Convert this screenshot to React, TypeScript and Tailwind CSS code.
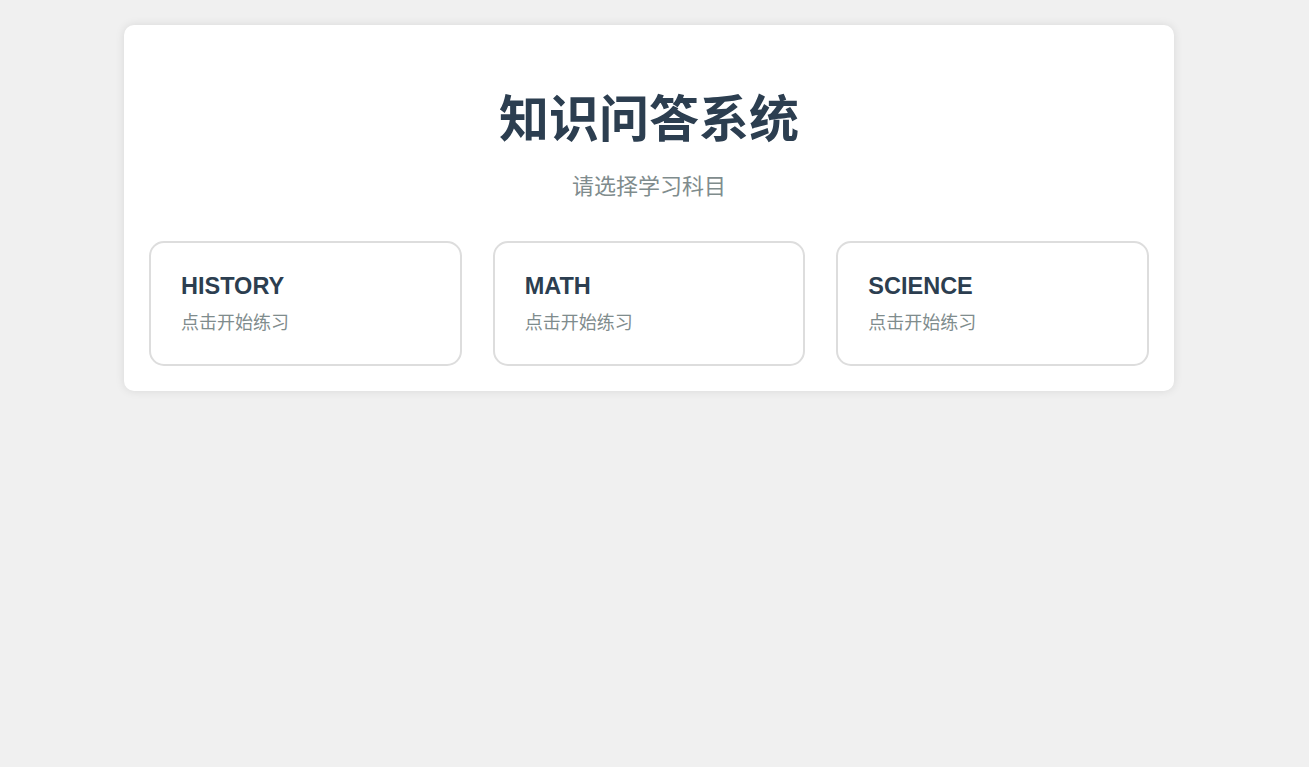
const subjects = ["HISTORY", "MATH", "SCIENCE"];

export default function App() {
  return (
    <div
      className="min-h-screen bg-[#f0f0f0] pt-[25px]"
      style={{ fontFamily: '"Liberation Sans", "Noto Sans CJK SC", sans-serif' }}
    >
      <div className="ml-[124px] w-[1050px] rounded-[10px] bg-white p-[25px] shadow-[0_0_10px_rgba(0,0,0,0.1)]">
        <h1 className="mt-[40px] text-center text-[50px] font-bold leading-[60px] text-[#2c3e50]">
          知识问答系统
        </h1>
        <p className="mt-[22px] text-center text-[22px] leading-[30px] text-[#7f8c8d]">
          请选择学习科目
        </p>
        <div className="mt-[39px] grid grid-cols-3 gap-[31px]">
          {subjects.map((s) => (
            <div
              key={s}
              className="h-[125px] cursor-pointer rounded-[15px] border-2 border-[#ddd] px-[30px] pt-[27px]"
            >
              <h3 className="text-[23.5px] font-bold leading-[32px] text-[#2c3e50]">{s}</h3>
              <p className="mt-[8px] text-[18px] leading-[26px] text-[#7f8c8d]">点击开始练习</p>
            </div>
          ))}
        </div>
      </div>
    </div>
  );
}
